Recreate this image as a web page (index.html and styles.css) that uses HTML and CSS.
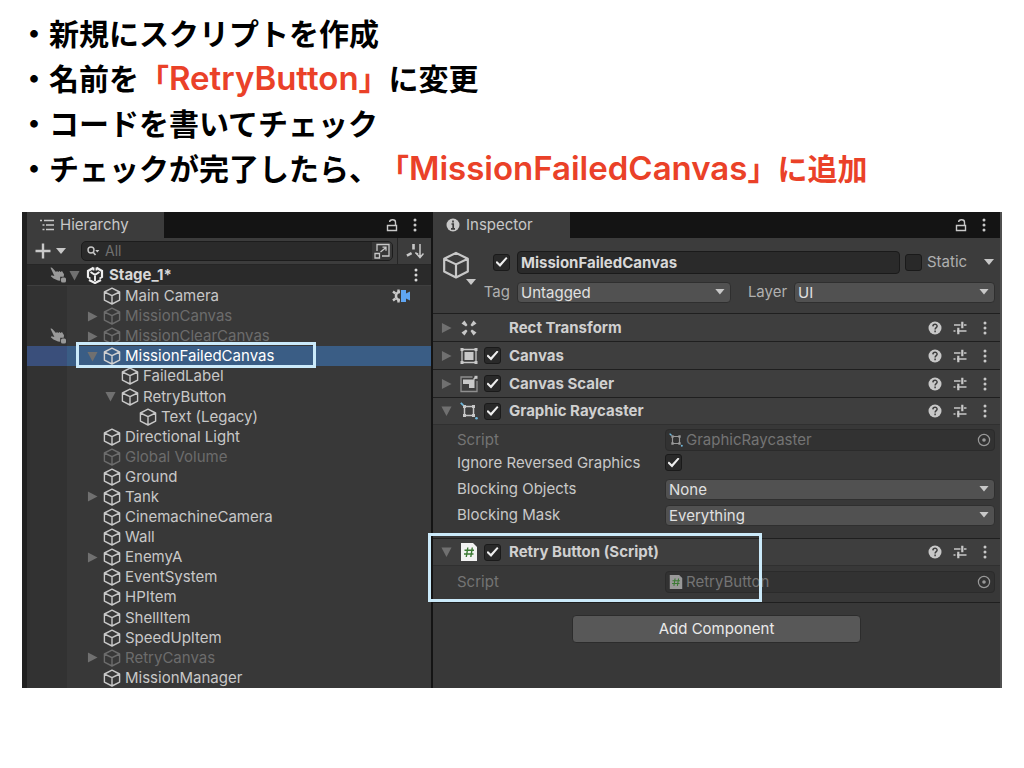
FILE: index.html
```html
<!DOCTYPE html>
<html lang="ja">
<head>
<meta charset="utf-8">
<title>RetryButton</title>
<link rel="stylesheet" href="styles.css">
</head>
<body>
<svg class="sprite" aria-hidden="true">
  <symbol id="cube" viewBox="0 0 18 18"><path d="M9 1.2 16.6 5v8.2L9 17 1.4 13.200V5zM1.400 5 9 8.600 16.600 5M9 8.600V17" fill="none" stroke="currentColor" stroke-width="1.400" stroke-linejoin="round"/></symbol>
  <symbol id="right" viewBox="0 0 12 12"><path d="M1 .5 11.500 6 1 11.500z" fill="currentColor"/></symbol>
  <symbol id="down" viewBox="0 0 12 12"><path d="M.5 1h11L6 11.500z" fill="currentColor"/></symbol>
  <symbol id="caret" viewBox="0 0 10 6"><path d="M0 0h10L5 6z" fill="currentColor"/></symbol>
  <symbol id="dots" viewBox="0 0 4 14"><circle cx="2" cy="2" r="1.500"/><circle cx="2" cy="7" r="1.500"/><circle cx="2" cy="12" r="1.500"/></symbol>
  <symbol id="lock" viewBox="0 0 12 14"><path d="M1.500 7.500h9v5h-9zM9.500 7.500V4.200C9.500 1.200 4 .8 3.600 4" fill="none" stroke="currentColor" stroke-width="1.400"/></symbol>
  <symbol id="help" viewBox="0 0 14 14"><circle cx="7" cy="7" r="6.500" fill="currentColor"/><path d="M4.900 5.400C5 2.600 9.200 2.700 9.100 5.200 9 6.600 7.100 6.600 7.100 8.400M7.100 9.600v1.700" fill="none" stroke="#3e3e3e" stroke-width="1.500"/></symbol>
  <symbol id="sliders" viewBox="0 0 14 14"><path d="M1 4h6.500M11 4h2.500M.5 10h2M4 10h9.500" fill="none" stroke="currentColor" stroke-width="1.500"/><path d="M9.300.8v6.400M5.300 6.800v6.400" fill="none" stroke="currentColor" stroke-width="2.200"/></symbol>
  <symbol id="hand" viewBox="0 0 16 16"><path d="M.5.8C1.300 0 2 .6 2.600 1.300L6 5l1-1 1.200.9 1.200-1 1.200 1 1.400-.9 2 3.200-.3 2.500h-3.500v4L8 13.500 3.500 11.500.8 9.200l.8-1 2.800.8z" fill="currentColor"/><rect x="11" y="10.500" width="5" height="5" rx="1.500" fill="currentColor"/></symbol>
  <symbol id="target" viewBox="0 0 14 14"><circle cx="7" cy="7" r="5.600" fill="none" stroke="currentColor" stroke-width="1.200"/><circle cx="7" cy="7" r="1.800" fill="currentColor"/></symbol>
  <symbol id="ray" viewBox="0 0 18 18"><path d="M4.500 4.500h9v9h-9z" fill="none" stroke="currentColor" stroke-width="1.500"/><path d="M3 3h3v3H3zM12 3h3v3h-3zM3 12h3v3H3zM12 12h3v3h-3z" fill="currentColor"/><path d="M.8.8 3.300 3.300" stroke="#6fb8dc" stroke-width="1.800"/><circle cx="16.500" cy="16.300" r="1.300" fill="#6fb8dc"/></symbol>
  <symbol id="script" viewBox="0 0 16 18"><path d="M0 0h12l4 4v14H0z" fill="currentColor"/><path d="M6.800 4.500 5.300 14M11.300 4.500 9.800 14M3.500 7.300h9.500M3 11h9.500" fill="none" stroke="#3c7a34" stroke-width="1.400"/></symbol>
</svg>

<ul class="steps">
  <li>・新規にスクリプトを作成</li>
  <li>・名前を<em>「<span class="latin">RetryButton</span>」</em>に変更</li>
  <li>・コードを書いてチェック</li>
  <li>・チェックが完了したら、<em>「<span class="latin">MissionFailedCanvas</span>」に追加</em></li>
</ul>

<main class="editor">
  <section class="hierarchy">
    <header class="tabs">
      <h2 class="tab"><svg class="i14" viewBox="0 0 14 14"><path d="M0 2.500h2M4 2.500h10M2.500 7h2M6 7h8M2.500 11.500h2M6 11.500h8" stroke="currentColor" stroke-width="1.400"/></svg>Hierarchy</h2>
      <button class="icon" aria-label="Lock"><svg class="lock"><use href="#lock"/></svg></button>
      <button class="icon" aria-label="Menu"><svg class="dots"><use href="#dots"/></svg></button>
    </header>
    <div class="toolbar">
      <button class="icon add" aria-label="Add"><svg class="i16" viewBox="0 0 16 16"><path d="M8 .5v15M.5 8h15" stroke="currentColor" stroke-width="2.400"/></svg><svg class="caret"><use href="#caret"/></svg></button>
      <div class="search">
        <svg class="i14" viewBox="0 0 14 14"><circle cx="4" cy="6" r="3" fill="none" stroke="currentColor" stroke-width="1.400"/><path d="M6.200 8.200 8.500 11" stroke="currentColor" stroke-width="1.600"/><path d="M8.200 6h4.200l-2.100 2.500z" fill="currentColor"/></svg>
        <input type="search" aria-label="Search" placeholder="All">
        <button class="icon pick" aria-label="Search window"><svg class="i16" viewBox="0 0 16 16"><path d="M3 8V1.500h12V13H8M1 10.500h4.500V15H1zM6.500 9 12 4.500M8.500 4.200H12v3.600" fill="none" stroke="currentColor" stroke-width="1.300"/></svg></button>
      </div>
      <button class="icon sort" aria-label="Sort"><svg viewBox="0 0 18 16"><path d="M14 1v13M10.500 10.500l3.500 4 3.500-4" fill="none" stroke="currentColor" stroke-width="1.500"/><path d="M6.200 1h2.600v5.500H6.200zM.3 11.500 5 9l1.200 2.200-4.700 2.500zM9.500 9l3 1.500-.8 1.500-2.700-1.500z" fill="currentColor"/></svg></button>
    </div>
    <div class="row scene">
      <span class="gutter"><svg class="i16"><use href="#hand"/></svg></span>
      <span class="fold"><svg><use href="#down"/></svg></span>
      <svg class="cube" viewBox="0 0 18 18"><path d="M7.500 1.800 2 5v6.500M10.500 1.800 16 5v6.500M3 14l6 3 6-3" fill="none" stroke="currentColor" stroke-width="2.200"/><path d="M4.500 6 9 8.800 13.500 6M9 8.800V15M7.500 1.500v3M10.500 1.500v3M1.500 11l3 1.500M16.500 11l-3 1.500" fill="none" stroke="currentColor" stroke-width="1.900"/></svg>
      <b>Stage_1*</b>
      <button class="icon" aria-label="Scene menu"><svg class="dots"><use href="#dots"/></svg></button>
    </div>
    <ul class="tree">
      <li class="row"><span class="gutter"></span><span class="fold l1"></span><svg class="cube"><use href="#cube"/></svg><span>Main Camera</span><svg class="cine" viewBox="0 0 18 14"><path d="M8 3A4 4 0 0 0 8 11" fill="none" stroke="currentColor" stroke-width="2.600"/><path d="M3.500 4.500 1 2.500M3.500 9.500 1 11.500M6.500 3V.5M6.500 11v2.500" stroke="currentColor" stroke-width="2.400"/><path d="M9 1h5v3.500L18 2.500v9l-4-2V13H9z" fill="#5fa5f2"/></svg></li>
      <li class="row off"><span class="gutter"></span><span class="fold l1"><svg><use href="#right"/></svg></span><svg class="cube"><use href="#cube"/></svg><span>MissionCanvas</span></li>
      <li class="row off"><span class="gutter"><svg class="i16"><use href="#hand"/></svg></span><span class="fold l1"><svg><use href="#right"/></svg></span><svg class="cube"><use href="#cube"/></svg><span>MissionClearCanvas</span></li>
      <li class="row selected"><span class="gutter"></span><span class="fold l1"><svg><use href="#down"/></svg></span><svg class="cube"><use href="#cube"/></svg><span>MissionFailedCanvas</span><i class="mark mark-row"></i></li>
      <li class="row"><span class="gutter"></span><span class="fold l2"></span><svg class="cube"><use href="#cube"/></svg><span>FailedLabel</span></li>
      <li class="row"><span class="gutter"></span><span class="fold l2"><svg><use href="#down"/></svg></span><svg class="cube"><use href="#cube"/></svg><span>RetryButton</span></li>
      <li class="row"><span class="gutter"></span><span class="fold l3"></span><svg class="cube"><use href="#cube"/></svg><span>Text (Legacy)</span></li>
      <li class="row"><span class="gutter"></span><span class="fold l1"></span><svg class="cube"><use href="#cube"/></svg><span>Directional Light</span></li>
      <li class="row off"><span class="gutter"></span><span class="fold l1"></span><svg class="cube"><use href="#cube"/></svg><span>Global Volume</span></li>
      <li class="row"><span class="gutter"></span><span class="fold l1"></span><svg class="cube"><use href="#cube"/></svg><span>Ground</span></li>
      <li class="row"><span class="gutter"></span><span class="fold l1"><svg><use href="#right"/></svg></span><svg class="cube"><use href="#cube"/></svg><span>Tank</span></li>
      <li class="row"><span class="gutter"></span><span class="fold l1"></span><svg class="cube"><use href="#cube"/></svg><span>CinemachineCamera</span></li>
      <li class="row"><span class="gutter"></span><span class="fold l1"></span><svg class="cube"><use href="#cube"/></svg><span>Wall</span></li>
      <li class="row"><span class="gutter"></span><span class="fold l1"><svg><use href="#right"/></svg></span><svg class="cube"><use href="#cube"/></svg><span>EnemyA</span></li>
      <li class="row"><span class="gutter"></span><span class="fold l1"></span><svg class="cube"><use href="#cube"/></svg><span>EventSystem</span></li>
      <li class="row"><span class="gutter"></span><span class="fold l1"></span><svg class="cube"><use href="#cube"/></svg><span>HPItem</span></li>
      <li class="row"><span class="gutter"></span><span class="fold l1"></span><svg class="cube"><use href="#cube"/></svg><span>ShellItem</span></li>
      <li class="row"><span class="gutter"></span><span class="fold l1"></span><svg class="cube"><use href="#cube"/></svg><span>SpeedUpItem</span></li>
      <li class="row off"><span class="gutter"></span><span class="fold l1"><svg><use href="#right"/></svg></span><svg class="cube"><use href="#cube"/></svg><span>RetryCanvas</span></li>
      <li class="row"><span class="gutter"></span><span class="fold l1"></span><svg class="cube"><use href="#cube"/></svg><span>MissionManager</span></li>
    </ul>
  </section>

  <section class="inspector">
    <header class="tabs">
      <h2 class="tab"><svg class="i14" viewBox="0 0 14 14"><circle cx="7" cy="7" r="6.500" fill="currentColor"/><path d="M7 2.500v2M5.500 6H7.200v4.500M5 10.800h4" fill="none" stroke="#3c3c3c" stroke-width="1.700"/></svg>Inspector</h2>
      <button class="icon" aria-label="Lock"><svg class="lock"><use href="#lock"/></svg></button>
      <button class="icon" aria-label="Menu"><svg class="dots"><use href="#dots"/></svg></button>
    </header>

    <div class="object">
      <button class="icon gizmo" aria-label="Icon"><svg class="big"><use href="#cube"/></svg><svg class="caret"><use href="#caret"/></svg></button>
      <div class="fields">
        <div class="line">
          <span class="lead"><input type="checkbox" aria-label="Active" checked></span>
          <input class="name" type="text" aria-label="Name" value="MissionFailedCanvas">
          <input type="checkbox" id="static">
          <label class="static" for="static">Static</label>
          <svg class="caret"><use href="#caret"/></svg>
        </div>
        <div class="line">
          <label class="lead" for="tag">Tag</label>
          <span class="select tag"><select id="tag"><option>Untagged</option></select></span>
          <label class="layer-label" for="layer">Layer</label>
          <span class="select layer"><select id="layer"><option>UI</option></select></span>
        </div>
      </div>
    </div>

    <article class="component">
      <header class="head">
        <span class="arrow"><svg><use href="#right"/></svg></span>
        <svg class="kind" viewBox="0 0 18 18"><path d="M1.500 4.500 4.500 1.500l3 4.500L6 7.500zM13.500 1.500l3 3L12 7.500 10.500 6zM1.500 13.500l3 3 3-4.500L6 10.500zM16.500 13.500l-3 3-3-4.500 1.500-1.500z" fill="currentColor"/></svg>
        <span class="blank"></span><b>Rect Transform</b>
        <button class="icon" aria-label="Help"><svg class="i14"><use href="#help"/></svg></button><button class="icon" aria-label="Presets"><svg class="i14"><use href="#sliders"/></svg></button><button class="icon" aria-label="Menu"><svg class="dots"><use href="#dots"/></svg></button>
      </header>
    </article>
    <article class="component">
      <header class="head">
        <span class="arrow"><svg><use href="#right"/></svg></span>
        <svg class="kind" viewBox="0 0 18 18"><path d="M2 2.500h14v13H2z" fill="none" stroke="currentColor" stroke-width="1.300"/><path d="M4.500 5h9v8h-9zM.5 1h3v3h-3zM14.500 1h3v3h-3zM.5 14h3v3h-3zM14.500 14h3v3h-3z" fill="currentColor"/></svg>
        <input type="checkbox" id="c1" checked><label for="c1">Canvas</label>
        <button class="icon" aria-label="Help"><svg class="i14"><use href="#help"/></svg></button><button class="icon" aria-label="Presets"><svg class="i14"><use href="#sliders"/></svg></button><button class="icon" aria-label="Menu"><svg class="dots"><use href="#dots"/></svg></button>
      </header>
    </article>
    <article class="component">
      <header class="head">
        <span class="arrow"><svg><use href="#right"/></svg></span>
        <svg class="kind" viewBox="0 0 18 18"><path d="M12.500 2H1v14.500h16V6" fill="none" stroke="#8f8f8f" stroke-width="1.300"/><path d="M3 4.500h11.500v8.500H9V9H3z" fill="currentColor"/><path d="m13.500 4.500 2.500-2.500" stroke="currentColor" stroke-width="1.500"/><path d="M14.500.8h3v3h-3z" fill="currentColor"/></svg>
        <input type="checkbox" id="c2" checked><label for="c2">Canvas Scaler</label>
        <button class="icon" aria-label="Help"><svg class="i14"><use href="#help"/></svg></button><button class="icon" aria-label="Presets"><svg class="i14"><use href="#sliders"/></svg></button><button class="icon" aria-label="Menu"><svg class="dots"><use href="#dots"/></svg></button>
      </header>
    </article>
    <article class="component open">
      <header class="head">
        <span class="arrow"><svg><use href="#down"/></svg></span>
        <svg class="kind"><use href="#ray"/></svg>
        <input type="checkbox" id="c3" checked><label for="c3">Graphic Raycaster</label>
        <button class="icon" aria-label="Help"><svg class="i14"><use href="#help"/></svg></button><button class="icon" aria-label="Presets"><svg class="i14"><use href="#sliders"/></svg></button><button class="icon" aria-label="Menu"><svg class="dots"><use href="#dots"/></svg></button>
      </header>
      <div class="props">
        <div class="prop dim"><span>Script</span><span class="object-field"><svg class="i14"><use href="#ray"/></svg><span>GraphicRaycaster</span><svg class="i14 end"><use href="#target"/></svg></span></div>
        <div class="prop"><label for="irg">Ignore Reversed Graphics</label><input type="checkbox" id="irg" checked></div>
        <div class="prop wide"><label for="bo">Blocking Objects</label><span class="select"><select id="bo"><option>None</option></select></span></div>
        <div class="prop wide"><label for="bm">Blocking Mask</label><span class="select"><select id="bm"><option>Everything</option></select></span></div>
      </div>
    </article>
    <article class="component open last">
      <header class="head">
        <span class="arrow"><svg><use href="#down"/></svg></span>
        <svg class="kind paper"><use href="#script"/></svg>
        <input type="checkbox" id="c4" checked><label for="c4">Retry Button (Script)</label>
        <button class="icon" aria-label="Help"><svg class="i14"><use href="#help"/></svg></button><button class="icon" aria-label="Presets"><svg class="i14"><use href="#sliders"/></svg></button><button class="icon" aria-label="Menu"><svg class="dots"><use href="#dots"/></svg></button>
      </header>
      <div class="props">
        <div class="prop dim"><span>Script</span><span class="object-field"><svg class="i14"><use href="#script"/></svg><span>RetryButton</span><svg class="i14 end"><use href="#target"/></svg></span></div>
      </div>
      <i class="mark mark-component"></i>
    </article>
    <button class="add-component">Add Component</button>
  </section>
</main>
</body>
</html>
```
FILE: styles.css
```css
* { box-sizing: border-box; }
body {
  margin: 0;
  background: #fff;
  font-family: Inter, "Liberation Sans", sans-serif;
}
.sprite { position: absolute; width: 0; height: 0; }
svg { display: block; flex: none; }
ul { list-style: none; margin: 0; padding: 0; }

.steps {
  padding: 10px 19px 22px;
  font: 700 30px/45px "Noto Sans CJK JP", sans-serif;
  color: #000;
  text-spacing-trim: space-all;
}
.steps li { height: 45px; }
.steps em { font-style: normal; color: #ea4128; }
.latin { font: 600 33px/45px Inter, sans-serif; }

.editor {
  display: grid;
  grid-template-columns: 411fr 569fr;
  min-height: 476px;
  margin: 0 22px;
  color: #c8c8c8;
  background: #383838;
  font-size: 15px;
  line-height: 20px;
}
.hierarchy {
  display: flex;
  flex-direction: column;
  min-width: 0;
  border-left: 5px solid #202020;
  border-right: 2px solid #141414;
}
.inspector {
  display: flex;
  flex-direction: column;
  min-width: 0;
  border-right: 2px solid #505050;
}

input, select, button { font: inherit; color: inherit; margin: 0; }
.icon { display: flex; align-items: center; justify-content: center; padding: 0; border: 0; background: none; }
.i14 { width: 14px; height: 14px; }
.i16 { width: 16px; height: 16px; }
.dots { width: 4px; height: 14px; fill: currentColor; }
.lock { width: 12px; height: 14px; }
.caret { width: 10px; height: 6px; }

.tabs { display: flex; align-items: center; height: 26px; background: #141414; padding-right: 14px; gap: 15px; }
.tab {
  display: flex; align-items: center; gap: 6px;
  height: 26px; width: 137px; margin: 0 auto 0 0; padding-left: 13px;
  background: #3c3c3c; font-size: 15px; font-weight: 400;
}

.toolbar { display: flex; align-items: center; height: 27px; background: #3c3c3c; border-bottom: 1px solid #262626; }
.add { gap: 5px; padding-left: 8px; margin-right: 15px; }
.search { display: flex; flex: 1; align-items: center; min-width: 0; height: 20px; padding-left: 5px; border: 1px solid #1c1c1c; border-radius: 5px; background: #2a2a2a; }
.search input { flex: 1; min-width: 0; margin-left: 4px; padding: 0; border: 0; background: none; font-size: 14px; }
.search input::placeholder { color: #707070; }
.pick { width: 20px; height: 18px; background: #383838; border-radius: 0 4px 4px 0; }
.sort { width: 34px; height: 26px; margin-left: 4px; border-left: 1px solid #262626; }
.sort svg { width: 18px; height: 16px; }

.row { position: relative; display: flex; align-items: center; min-height: 20px; white-space: nowrap; }
.gutter { display: flex; align-items: center; justify-content: flex-end; align-self: stretch; width: 40px; padding-right: 1px; background: #323232; color: #999; }
.fold { display: flex; justify-content: flex-end; width: 16px; padding-right: 3px; color: #707070; }
.fold svg { width: 11px; height: 11px; }
.l1 { width: 35px; padding-right: 4px; }
.l2 { width: 53px; padding-right: 4px; }
.l3 { width: 71px; }
.cube { width: 18px; height: 18px; margin-right: 4px; }
.fold + .cube { margin-left: 1px; }
.scene { height: 21px; background: #2a2a2a; border-bottom: 1px solid #3f3f3f; color: #d8d8d8; }
.scene .gutter { background: none; }
.scene .cube { margin-left: 3px; margin-right: 5px; color: #eee; }
.scene .icon { margin-left: auto; margin-right: 13px; }
.tree { display: flex; flex: 1; flex-direction: column; }
.tree .row { flex: 1; }
.off { color: #6c6c6c; }
.selected { background: #3a5d85; color: #fff; }
.selected .gutter { background: #3a4f7b; }
.selected .cube { color: #d0d0d0; }
.cine { width: 18px; height: 14px; margin-left: auto; margin-right: 21px; }

.mark { position: absolute; border: 3px solid #cbeafa; pointer-events: none; z-index: 1; }
.mark-row { left: 49px; top: -4px; width: 240px; height: 26px; }
.mark-component { left: -5px; top: -6px; width: 334px; height: 69px; }

input[type="checkbox"] {
  appearance: none; display: grid; place-items: center; flex: none;
  width: 17px; height: 17px; border: 1px solid #1a1a1a; border-radius: 3px; background: #292929;
}
input[type="checkbox"]:checked::after {
  content: ""; width: 12px; height: 10px; background: #eee;
  clip-path: polygon(0 55%, 12% 40%, 36% 68%, 88% 0, 100% 12%, 38% 100%);
}

.object { display: flex; height: 75px; padding: 13px 5px 0 9px; background: #3c3c3c; }
.gizmo { flex-direction: column; align-items: flex-start; justify-content: flex-start; width: 34px; }
.big { width: 28px; height: 28px; }
.gizmo .caret { margin-left: 24px; }
.fields { flex: 1; min-width: 0; }
.line { display: flex; align-items: center; height: 22px; }
.line + .line { margin-top: 8px; }
.lead { display: flex; justify-content: flex-end; width: 34px; margin-right: 7px; color: #b0b0b0; }
.name { flex: 1; min-width: 0; height: 23px; padding: 0 3px; border: 1px solid #1a1a1a; border-radius: 4px; background: #2a2a2a; font-weight: 700; color: #d8d8d8; }
.name + input { margin-left: 5px; }
.static { width: 58px; margin-left: 5px; margin-right: auto; color: #b0b0b0; }
.static + .caret { margin: 0 1px 0 -1px; }
.layer-label { margin: 0 7px 0 17px; color: #b0b0b0; }
.select { position: relative; display: flex; min-width: 0; height: 21px; }
.select::after { content: ""; position: absolute; right: 6px; top: 7px; width: 10px; height: 6px; background: #c8c8c8; clip-path: polygon(0 0, 100% 0, 50% 100%); pointer-events: none; }
.select select { appearance: none; width: 100%; padding: 0 3px; border: 1px solid #2f2f2f; border-radius: 4px; background: #515151; color: #e0e0e0; line-height: 19px; }
.tag { flex: 214; }
.layer { flex: 201; }

.component { position: relative; border-top: 1px solid #1f1f1f; }
.head { display: flex; align-items: center; height: 27px; padding: 0 13px 0 8px; background: #3e3e3e; }
.head label, .head b { margin: 0 auto 0 8px; font-weight: 700; color: #d0d0d0; }
.head .icon { width: 14px; margin-left: 11px; }
.head .icon:last-child { width: 4px; margin-left: 16px; }
.arrow { width: 19px; color: #707070; }
.arrow svg { width: 11px; height: 12px; }
.kind { width: 18px; height: 18px; margin-right: 6px; }
.paper { color: #f2f2f2; }
.blank { width: 17px; }
.open .head { border-bottom: 1px solid #303030; }
.props { padding: 3px 5px 10px 24px; }
.last .props { padding: 4px 5px 9px 24px; }
.last { border-bottom: 1px solid #1f1f1f; }
.prop { display: grid; grid-template-columns: 208fr 330fr; align-items: center; height: 23px; }
.wide { height: 26px; margin-top: 2px; }
.wide + .wide { margin-top: 0; }
.dim { color: #747474; }
.object-field { display: flex; align-items: center; gap: 3px; height: 22px; padding: 0 3px; border: 1px solid #2b2b2b; border-radius: 4px; background: #323232; }
.dim .i14 { color: #999; }
.object-field .end { margin-left: auto; }

.add-component { align-self: center; width: 51%; height: 28px; margin-top: 12px; padding: 0; border: 1px solid #2c2c2c; border-radius: 4px; background: #585858; color: #eaeaea; }
```
